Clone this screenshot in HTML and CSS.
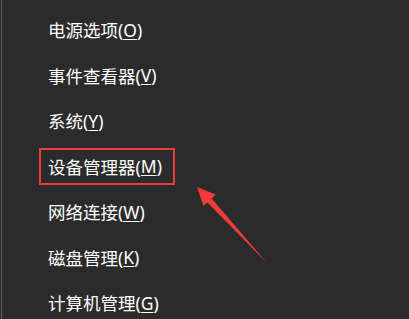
FILE: index.html
```html
<!DOCTYPE html>
<html lang="zh-CN">
<head>
<meta charset="utf-8">
<link rel="stylesheet" href="styles.css">
</head>
<body>
<div class="menu">
  <div class="item">电源选项(<u>O</u>)</div>
  <div class="item">事件查看器(<u>V</u>)</div>
  <div class="item">系统(<u>Y</u>)</div>
  <div class="item"><span class="hl">设备管理器(<u>M</u>)</span></div>
  <div class="item">网络连接(<u>W</u>)</div>
  <div class="item">磁盘管理(<u>K</u>)</div>
  <div class="item">计算机管理(<u>G</u>)</div>
</div>
<svg class="arrow" width="409" height="319" viewBox="0 0 409 319">
  <polygon points="197,187 215.5,194.5 211.7,198.5 267,263 207.3,202.5 203.5,206" fill="#f23a3a"/>
</svg>
</body>
</html>
```
FILE: styles.css
```css
html, body {
  margin: 0;
  padding: 0;
  width: 409px;
  height: 319px;
  overflow: hidden;
  background: #2b2b2b;
}
body {
  position: relative;
  border-left: 1px solid #2b2b2b;
  box-sizing: border-box;
  font-family: "Noto Sans", "Noto Sans CJK SC", sans-serif;
  color: #ffffff;
}
body::before {
  content: "";
  position: absolute;
  left: 0;
  top: 0;
  width: 1px;
  height: 100%;
  background: #5e5e5e;
}
.menu {
  padding: 7px 0 0 47px;
  display: flex;
  flex-direction: column;
}
.item {
  height: 45.5px;
  display: flex;
  align-items: center;
  font-size: 17.5px;
  white-space: nowrap;
}
.item u {
  text-decoration-thickness: 1px;
  text-underline-offset: 2px;
}
.hl {
  display: flex;
  align-items: center;
  box-sizing: border-box;
  width: 136px;
  height: 37px;
  margin-left: -9px;
  padding-left: 7px;
  border: 2px solid #ef3b3b;
}
.arrow {
  position: absolute;
  left: -1px;
  top: 0;
}
```
